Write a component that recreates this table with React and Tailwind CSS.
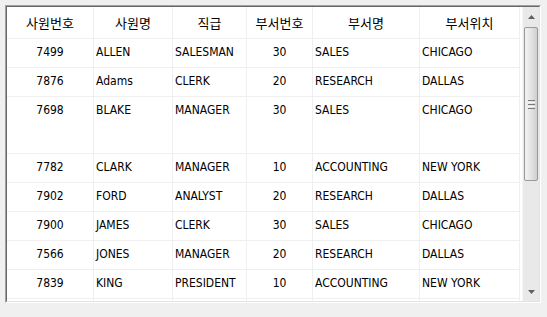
import React from "react";

const columns = [
  { title: "사원번호", width: "w-[87px]", align: "center" },
  { title: "사원명", width: "w-[79px]", align: "left" },
  { title: "직급", width: "w-[74px]", align: "left" },
  { title: "부서번호", width: "w-[66px]", align: "center" },
  { title: "부서명", width: "w-[107px]", align: "left" },
  { title: "부서위치", width: "w-[100px]", align: "left" },
];

const rows = [
  ["7499", "ALLEN", "SALESMAN", "30", "SALES", "CHICAGO"],
  ["7876", "Adams", "CLERK", "20", "RESEARCH", "DALLAS"],
  ["7698", "BLAKE", "MANAGER", "30", "SALES", "CHICAGO", "tall"],
  ["7782", "CLARK", "MANAGER", "10", "ACCOUNTING", "NEW YORK"],
  ["7902", "FORD", "ANALYST", "20", "RESEARCH", "DALLAS"],
  ["7900", "JAMES", "CLERK", "30", "SALES", "CHICAGO"],
  ["7566", "JONES", "MANAGER", "20", "RESEARCH", "DALLAS"],
  ["7839", "KING", "PRESIDENT", "10", "ACCOUNTING", "NEW YORK"],
  ["", "", "", "", "", ""],
];

const font = {
  fontFamily: '"DejaVu Sans Condensed", "DejaVu Sans", "Noto Sans CJK KR", sans-serif',
};

const ScrollBar = () => (
  <div className="w-[17px] h-full bg-[#e9e9e9] border-l border-[#f7f7f7] flex flex-col items-center">
    {/* up button */}
    <div className="h-[19px] w-full flex items-center justify-center">
      <svg width="7" height="4" viewBox="0 0 7 4">
        <path d="M3.5 0 L7 4 L0 4 Z" fill="#606060" />
      </svg>
    </div>
    {/* thumb */}
    <div className="w-[14px] h-[154px] mt-[1px] rounded-[2px] border border-[#9a9a9a] bg-gradient-to-r from-[#f2f2f2] via-[#e4e4e4] to-[#cfcfcf] flex flex-col items-center justify-center gap-[1px]">
      <div className="w-[7px] h-[1px] bg-[#7a7a7a]" />
      <div className="w-[7px] h-[1px] bg-[#f8f8f8]" />
      <div className="w-[7px] h-[1px] bg-[#7a7a7a]" />
      <div className="w-[7px] h-[1px] bg-[#f8f8f8]" />
      <div className="w-[7px] h-[1px] bg-[#7a7a7a]" />
    </div>
    <div className="flex-1" />
    {/* down button */}
    <div className="h-[19px] w-full flex items-center justify-center">
      <svg width="7" height="4" viewBox="0 0 7 4">
        <path d="M0 0 L7 0 L3.5 4 Z" fill="#606060" />
      </svg>
    </div>
  </div>
);

export default function App() {
  return (
    <div className="w-[547px] h-[317px] bg-[#f0f0f0] pt-[5px] pl-[5px]" style={font}>
      {/* sunken frame */}
      <div className="w-[536px] h-[298px] border border-t-[#a0a0a0] border-l-[#a0a0a0] border-r-white border-b-white">
        <div className="w-full h-full border border-t-[#696969] border-l-[#696969] border-r-[#e3e3e3] border-b-[#e3e3e3] bg-white flex overflow-hidden">
          <div className="w-[515px] h-full overflow-hidden">
            {/* header */}
            <div className="flex h-[32px]">
              {columns.map((c) => (
                <div
                  key={c.title}
                  className={`${c.width} h-full border-r border-b border-[#efefef] flex items-center justify-center text-[13px] text-black`}
                  style={{ fontFamily: '"Noto Sans CJK KR", sans-serif' }}
                >
                  {c.title}
                </div>
              ))}
            </div>
            {/* body */}
            {rows.map((r, i) => (
              <div key={i} className={`flex ${r[6] ? "h-[57px]" : "h-[29px]"}`}>
                {columns.map((c, j) => (
                  <div
                    key={j}
                    className={`${c.width} h-full border-r border-b border-[#efefef] text-[12px] leading-[16px] text-black pt-[5px] whitespace-nowrap overflow-hidden ${
                      c.align === "center" ? "text-center" : "text-left pl-[2px]"
                    }`}
                  >
                    {r[j]}
                  </div>
                ))}
              </div>
            ))}
          </div>
          <ScrollBar />
        </div>
      </div>
    </div>
  );
}
